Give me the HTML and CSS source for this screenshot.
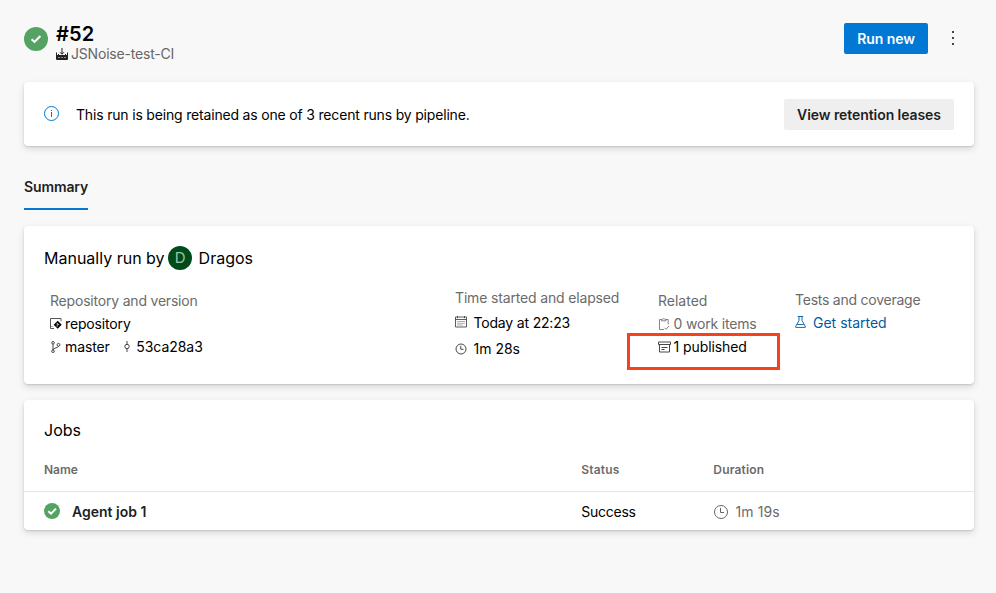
FILE: index.html
```html
<!DOCTYPE html>
<html lang="en">
<head>
<meta charset="utf-8">
<title>#52 JSNoise-test-CI</title>
<link rel="stylesheet" href="styles.css">
</head>
<body>
<header class="header">
  <svg class="status-large" viewBox="0 0 24 24"><circle cx="12" cy="12" r="12" fill="#55a362"/><path d="M7.600 12.200l2.900 2.700 5.900-6" fill="none" stroke="#fff" stroke-width="2.100"/></svg>
  <div class="heading">
    <h1 class="run-number">#52</h1>
    <div class="pipeline">
      <svg class="icon-pipeline" viewBox="0 0 12 12"><path d="M.5 4.500v7h11v-7M2.500 6v2.500M9.500 6v2.500M.5 7.500h11" fill="none" stroke="#222"/><path d="M1 8h10v3.500H1z" fill="#222"/><path d="M6 0v6M4 4.200l2 2 2-2" fill="none" stroke="#222"/><path d="M2.500 9.500h1M5.500 9.500h1M8.500 9.500h1" stroke="#f8f8f8"/></svg>
      <span>JSNoise-test-CI</span>
    </div>
  </div>
  <button class="button primary"><span>Run new</span></button>
  <button class="more" aria-label="More actions"><i></i><i></i><i></i></button>
</header>

<section class="card notice">
  <svg class="icon-info" viewBox="0 0 16 16" fill="none" stroke="#0078d4"><circle cx="7.500" cy="7.500" r="7"/><path d="M7.500 6v5M7.500 4v1"/></svg>
  <p class="notice-text"><span>This run is being retained as one of 3 recent runs by pipeline.</span></p>
  <button class="button secondary"><span>View retention leases</span></button>
</section>

<nav class="tabs"><a class="tab">Summary</a></nav>

<section class="card summary">
  <h2 class="run-by"><span>Manually run by</span><b class="avatar">D</b><span>Dragos</span></h2>
  <div class="details">
    <div class="detail repo">
      <div class="label">Repository and version</div>
      <div class="line">
        <svg class="icon12" viewBox="0 0 12 12"><path d="M4 10.500H.5V.5h10.500v2.500" fill="none" stroke="#444" stroke-width=".9"/><path d="M1 8.500h2.500" stroke="#888" stroke-width=".6"/><path d="M7.700 2.700L11.700 6.700l-4 4-4-4z" fill="#000"/><path d="M7.200 4.800v4M7.200 5.500l2 1.500" stroke="#fff" stroke-width=".7"/></svg>
        <span class="t-repository">repository</span>
      </div>
      <div class="line">
        <svg class="icon12" viewBox="0 0 12 12" fill="none" stroke="#333" stroke-width=".9"><circle cx="3" cy="1.800" r="1.300"/><circle cx="3" cy="10.200" r="1.300"/><circle cx="8.500" cy="3.800" r="1.400"/><path d="M3 3.100v5.800M8.400 5.200C8.200 7.300 3.500 6.500 3 8.900"/></svg>
        <span class="t-master">master</span>
        <svg class="icon-commit" viewBox="0 0 8 12" fill="none" stroke="#333" stroke-width=".9"><circle cx="4" cy="5.500" r="2.200"/><path d="M4 0v3.300M4 7.700V11"/></svg>
        <span class="t-hash">53ca28a3</span>
      </div>
    </div>
    <div class="detail time">
      <div class="label">Time started and elapsed</div>
      <div class="line">
        <svg class="icon-calendar" viewBox="0 0 12 12" fill="none" stroke="#333" stroke-width=".8"><path d="M.5 1h11v10H.5zM.5 3.500h11M2.500 0v2.200M9.500 0v2.200"/><path d="M2.500 5.500h8M2.500 7.300h8M2.500 9h6" stroke-dasharray="1 1"/></svg>
        <span class="t-today">Today at 22:23</span>
      </div>
      <div class="line">
        <svg class="icon12" viewBox="0 0 12 12" fill="none" stroke="#333" stroke-width=".9"><circle cx="6" cy="6" r="5"/><path d="M5.800 2.800v3.500h2.700"/></svg>
        <span class="t-elapsed">1m 28s</span>
      </div>
    </div>
    <div class="detail related">
      <div class="label">Related</div>
      <div class="line muted">
        <svg class="icon12" viewBox="0 0 12 12" fill="none" stroke="#777" stroke-width=".9"><path d="M3.500 1.500h-2v10h4.500M8 1.500h2.200v5M3.500 2.800V1.300h1.200a1.200 1.200 0 0 1 2.200 0H8v1.500zM6.500 9.800l1.500 1.500 3-3.300"/></svg>
        <span class="t-items">0 work items</span>
      </div>
      <div class="line published">
        <svg class="icon13" viewBox="0 0 13 12" fill="none" stroke="#333" stroke-width=".9"><path d="M.5 1h12v2.500H.5zM1.500 3.500v7.500h10V3.500M3.500 6.500h6M3.500 8.500h3"/></svg>
        <span class="t-published">1 published</span>
      </div>
    </div>
    <div class="detail tests">
      <div class="label">Tests and coverage</div>
      <div class="line link">
        <svg class="icon-flask" viewBox="0 0 12 12" fill="none" stroke="#005a9e" stroke-width=".9"><path d="M2.700.5h5.600M4 .5v4L.7 10.400v1h9.600v-1L7 4.500v-4M2.200 8.500h6.600"/></svg>
        <span class="t-started">Get started</span>
      </div>
    </div>
  </div>
</section>

<section class="card jobs">
  <h2 class="jobs-title">Jobs</h2>
  <div class="row head"><span class="h-name">Name</span><span class="h-status">Status</span><span class="h-duration">Duration</span></div>
  <div class="row job">
    <div class="job-name">
      <svg class="status-small" viewBox="0 0 24 24"><circle cx="12" cy="12" r="12" fill="#55a362"/><path d="M6.500 12.300l4 3.600 7.500-7.500" fill="none" stroke="#fff" stroke-width="2.900"/></svg>
      <span>Agent job 1</span>
    </div>
    <div class="job-status"><span>Success</span></div>
    <div class="job-duration">
      <svg class="icon-clock" viewBox="0 0 16 16" fill="none" stroke="#666"><circle cx="8" cy="8" r="6.500"/><path d="M7.500 3.800v4.700h3.500"/></svg>
      <span>1m 19s</span>
    </div>
  </div>
</section>
</body>
</html>
```
FILE: styles.css
```css
* { box-sizing: border-box; }
body {
  min-height: 593px;
  margin: 0;
  padding: 22px 22px 0 24px;
  background: #f8f8f8;
  color: #000;
  font: 14px/20px Inter, "Liberation Sans", sans-serif;
}
h1, h2, p { margin: 0; font-weight: 400; }
svg { display: block; flex: none; }
span { white-space: nowrap; }
button { border: 0; font: inherit; }

.header { display: flex; align-items: flex-start; height: 60px; }
.status-large { width: 24px; height: 24px; margin: 5px 8px 0 0; }
.heading { flex: 1; }
.run-number { font-size: 20px; font-weight: 600; line-height: 24px; letter-spacing: .1px; }
.pipeline { display: flex; align-items: center; gap: 3px; height: 16px; color: #666; letter-spacing: -.19px; }
.icon-pipeline { width: 12px; height: 12px; }
.button { height: 31px; padding: 0; border-radius: 2px; font-weight: 600; letter-spacing: -.07px; }
.primary { width: 84px; margin-top: 1px; background: #0078d4; color: #fff; }
.secondary { width: 170px; background: #efefef; color: #1f1f1f; }
.more {
  display: flex; flex-direction: column; align-items: center; gap: 4px;
  width: 30px; margin: 9px 6px 0 10px; padding: 0; background: none;
}
.more i { width: 2px; height: 2px; background: #444; }

.card {
  background: #fff; border-radius: 4px;
  box-shadow: 0 3px 7px rgba(0, 0, 0, .13), 0 1px 2px rgba(0, 0, 0, .13);
}
.notice { display: flex; align-items: center; height: 64px; padding: 1px 20px 0; }
.icon-info { width: 16px; height: 16px; margin: 0 16px 1px 0; }
.notice-text { flex: 1; letter-spacing: -.18px; }

.tabs { display: flex; height: 64px; margin: 0 0 16px; padding-top: 28px; }
.tab { height: 36px; padding-top: 3px; border-bottom: 2px solid #0078d4; font-weight: 600; color: #1f1f1f; letter-spacing: -.12px; }

.summary { height: 158px; padding: 20px 20px 0; }
.run-by { display: flex; align-items: center; height: 24px; font-size: 16px; }
.avatar {
  width: 24px; height: 24px; margin: 0 6.500px 0 3.500px; border-radius: 50%;
  background: #004b1c; color: #9cc5a5; font-size: 15px; line-height: 24px; font-weight: 400; text-align: center;
}
.details { display: grid; grid-template-columns: 405px 203px 137px 1fr; padding-left: 6px; }
.detail { padding-top: 21px; }
.label { height: 23px; color: #6b6b6b; white-space: nowrap; letter-spacing: -.2px; }
.line { display: flex; align-items: center; height: 20px; margin-bottom: 3px; gap: 3px; }
.icon12 { width: 12px; height: 12px; }
.icon13 { width: 13px; height: 12px; margin-right: -1px; }
.icon-calendar { width: 12px; height: 12px; margin-bottom: 2px; }
.icon-flask { width: 12px; height: 12px; margin: 0 0 2px; }
.icon-commit { width: 8px; height: 12px; margin: 0 2.500px 0 10px; }
.t-repository { letter-spacing: -.15px; }
.t-master { letter-spacing: -.1px; }
.t-hash { letter-spacing: -.05px; }
.t-today, .t-items { letter-spacing: -.18px; }
.t-items, .t-published { margin-left: .5px; }
.t-published { letter-spacing: -.08px; }
.time { padding-top: 18px; }
.time .label { height: 25px; letter-spacing: -.16px; }
.time .line { gap: 6.500px; margin-bottom: 6px; }
.related .label { letter-spacing: 0; }
.muted { color: #6b6b6b; }
.tests { padding-top: 20px; }
.tests .label { letter-spacing: -.24px; }
.link { gap: 6px; color: #005a9e; }
.published { position: relative; }
.published::after {
  content: ""; position: absolute; left: -31px; top: -4px; box-sizing: border-box;
  width: 153px; height: 37px; border: 3px solid #f4421c;
}

.jobs { height: 130px; margin-top: 16px; }
.jobs-title { padding: 20px 20px 0; font-size: 16px; line-height: 20px; }
.row { display: grid; grid-template-columns: 537px 132px 1fr; align-items: center; padding: 0 20px; }
.head { height: 52px; padding-top: 9px; border-bottom: 1px solid #e6e6e6; font-size: 12px; font-weight: 600; color: #6b6b6b; }
.h-status, .h-duration { margin-left: .3px; letter-spacing: .18px; }
.job { height: 38px; padding-top: 1px; }
.job-name, .job-duration { display: flex; align-items: center; }
.job-name { gap: 12px; font-weight: 600; color: #1f1f1f; }
.status-small { width: 16px; height: 16px; margin-bottom: 1px; }
.job-status { padding-left: .3px; letter-spacing: -.25px; }
.job-duration { gap: 6.500px; color: #6b6b6b; letter-spacing: .1px; }
.icon-clock { width: 16px; height: 16px; }
```
